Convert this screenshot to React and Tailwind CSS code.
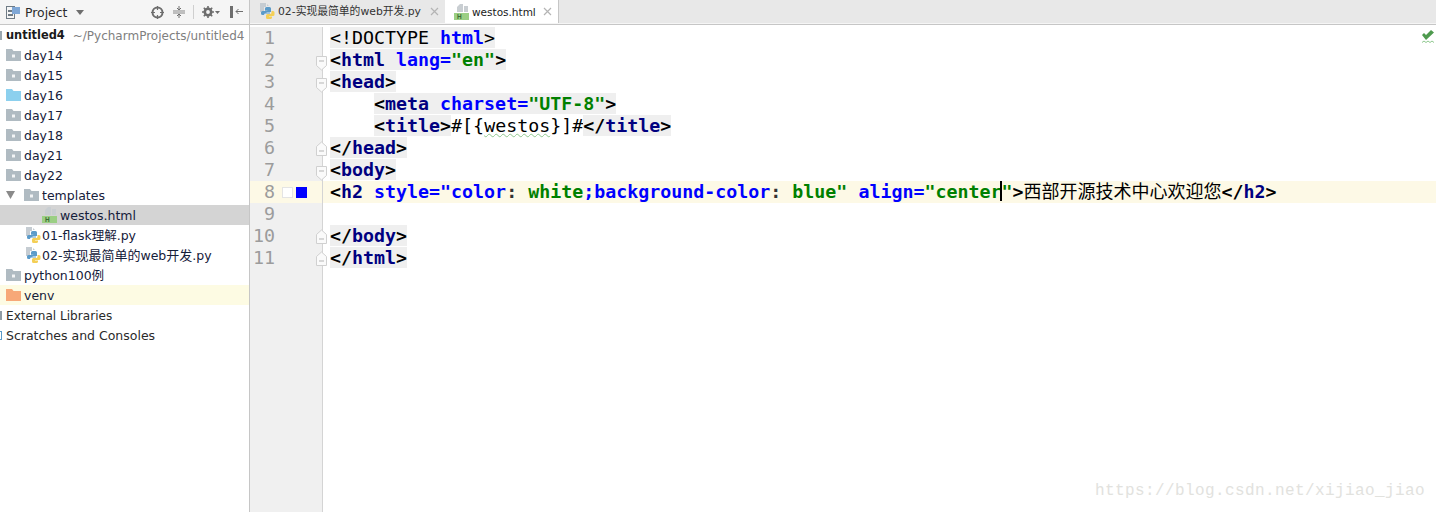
import React from "react";

const mono = "font-['DejaVu_Sans_Mono',monospace]";
const ui = "font-['DejaVu_Sans','Noto_Sans_CJK_SC',sans-serif]";

function Folder({ color = "#b0bbc2", dot = true }) {
  return (
    <svg width="15" height="12" viewBox="0 0 15 12" className="shrink-0">
      <path d="M0 0h6l1.500 2H15v10H0z" fill={color} />
      {dot && <rect x="6" y="5.500" width="3" height="3" fill="#f2f4f5" />}
    </svg>
  );
}

function PyIcon() {
  return (
    <svg width="16" height="17" viewBox="0 0 16 17" className="shrink-0">
      <path d="M1 0h6v4H5v5H1z" fill="#c5ccd2" />
      <path d="M8 1l2 2H8z" fill="#c5ccd2" />
      <path d="M6 5.500a1.500 1.500 0 0 1 1.500-1.500h3A1.500 1.500 0 0 1 12 5.500V9H7.500v.6H11v1H6.500A1.500 1.500 0 0 0 5 12H3.500A1.500 1.500 0 0 1 2 10.500v-1A1.500 1.500 0 0 1 3.500 8H8a1 1 0 0 0 .5-.2H6z" fill="#5b9bc9" />
      <path d="M12.500 8H14a1.500 1.500 0 0 1 1.500 1.500v2A1.500 1.500 0 0 1 14 13h-4v.6h3v1.200A1.500 1.500 0 0 1 11.500 16h-3A1.500 1.500 0 0 1 7 14.500V12.500A1.500 1.500 0 0 1 8.500 11h2.500a1.500 1.500 0 0 0 1.500-1.500z" fill="#f4cf56" />
    </svg>
  );
}

function HtmlIcon() {
  return (
    <svg width="15" height="16" viewBox="0 0 15 16" className="shrink-0">
      <path d="M3 3l3-3h3v8H3z" fill="#c9ced2" />
      <path d="M10 2h4v6h-4z" fill="#c9ced2" />
      <rect x="0" y="9" width="15" height="7" fill="#9bcf84" />
      <text x="3" y="15" fontSize="6.500" fontWeight="700" fill="#3c6b34" fontFamily="Liberation Sans">H</text>
    </svg>
  );
}

function CloseX() {
  return (
    <svg width="9" height="9" viewBox="0 0 9 9" className="shrink-0">
      <path d="M1 1l7 7M8 1L1 8" stroke="#b4b4b4" strokeWidth="1.200" />
    </svg>
  );
}

function Toolbar() {
  return (
    <div className="flex h-[25px] items-center border-b border-[#c6c6c6] bg-[#f5f5f5] pl-[6px]">
      <svg width="14" height="13" viewBox="0 0 14 13" className="shrink-0">
        <rect x="0.500" y="0.500" width="8" height="12" fill="none" stroke="#6f7b85" />
        <rect x="2" y="4" width="5" height="2" fill="#6f7b85" />
        <rect x="2" y="8" width="5" height="2" fill="#6f7b85" />
        <rect x="6" y="1" width="8" height="7" fill="#7fa7d6" />
      </svg>
      <span className={`ml-[5px] w-[42px] whitespace-nowrap pt-[2px] text-[12.4px] text-[#2a2a2a] ${ui}`}>Project</span>
      <svg width="8" height="5" viewBox="0 0 8 5" className="ml-[9px] shrink-0">
        <path d="M0 0h8L4 5z" fill="#6e6e6e" />
      </svg>
      <svg width="13" height="13" viewBox="0 0 13 13" className="ml-[67px] shrink-0">
        <circle cx="6.500" cy="6.500" r="5" fill="none" stroke="#6e6e6e" strokeWidth="2" />
        <path d="M6.500 0v4M6.500 9v4M0 6.500h4M9 6.500h4" stroke="#6e6e6e" strokeWidth="1.200" />
      </svg>
      <svg width="12" height="12" viewBox="0 0 12 12" className="ml-[9px] shrink-0">
        <path d="M0 6h12" stroke="#8a8a8a" />
        <path d="M0 4.500h12M0 7.500h12" stroke="#bdbdbd" />
        <path d="M6 0v3.500M4 2l2 2 2-2M6 12V8.500M4 10l2-2 2 2" stroke="#6e6e6e" fill="none" />
      </svg>
      <div className="ml-[8px] h-[14px] w-px bg-[#cfcfcf]" />
      <svg width="12" height="12" viewBox="0 0 12 12" className="ml-[8px] shrink-0">
        <circle cx="6" cy="6" r="3.200" fill="none" stroke="#6e6e6e" strokeWidth="2.600" />
        <path d="M6 0v2.500M6 9.500V12M0 6h2.500M9.500 6H12M1.800 1.800l1.800 1.800M8.400 8.400l1.800 1.800M1.800 10.200l1.800-1.800M8.400 3.600l1.800-1.800" stroke="#6e6e6e" strokeWidth="1.600" />
      </svg>
      <svg width="5" height="3" viewBox="0 0 5 3" className="ml-px shrink-0">
        <path d="M0 0h5L2.500 3z" fill="#6e6e6e" />
      </svg>
      <svg width="13" height="12" viewBox="0 0 13 12" className="ml-[10px] shrink-0">
        <rect x="0" y="0" width="3" height="12" fill="#6e6e6e" />
        <path d="M13 5.500H6M8.500 3L6 5.500 8.500 8" stroke="#6e6e6e" fill="none" />
      </svg>
    </div>
  );
}

function Row({ pad = "pl-[6px]", icon, gap = "gap-[3px]", className = "", children }) {
  return (
    <div className={`flex h-5 items-center ${pad} ${gap} text-[#15203a] ${className}`}>
      {icon}
      <span className="whitespace-nowrap pt-[2px]">{children}</span>
    </div>
  );
}

function Tree() {
  return (
    <div className={`text-[12.5px] ${ui}`}>
      <div className="flex h-5 items-center">
        <div className="h-[9px] w-[2px] shrink-0 bg-[#9aa7b0]" />
        <span className="ml-1 shrink-0 pt-[2px] text-[11.4px] font-bold text-[#1a1a1a]">untitled4</span>
        <span className="ml-[8px] whitespace-nowrap pt-[2px] text-[12px] text-[#808080]">~/PycharmProjects/untitled4</span>
      </div>
      {["day14", "day15"].map((d) => (
        <Row key={d} icon={<Folder />}>{d}</Row>
      ))}
      <Row icon={<Folder color="#8cd0ee" dot={false} />}>day16</Row>
      {["day17", "day18", "day21", "day22"].map((d) => (
        <Row key={d} icon={<Folder />}>{d}</Row>
      ))}
      <div className="flex h-5 items-center pl-[6px] text-[#15203a]">
        <svg width="9" height="8" viewBox="0 0 9 8" className="shrink-0">
          <path d="M0 0h9L4.500 8z" fill="#8a8a8a" />
        </svg>
        <div className="ml-[9px]">
          <Folder />
        </div>
        <span className="ml-[3px] pt-[2px]">templates</span>
      </div>
      <Row pad="pl-[42px]" icon={<HtmlIcon />} className="bg-[#d4d4d4]">westos.html</Row>
      <Row pad="pl-[25px]" gap="gap-px" icon={<PyIcon />}>01-flask理解.py</Row>
      <Row pad="pl-[25px]" gap="gap-px" icon={<PyIcon />}>
        02-<span className="text-[13px]">实现最简单的</span>web<span className="text-[13px]">开发</span>.py
      </Row>
      <Row icon={<Folder />}>python100例</Row>
      <Row icon={<Folder color="#f7a878" dot={false} />} className="bg-[#fdfbe3]">venv</Row>
      <div className="flex h-5 items-center text-[#2a2a2a]">
        <div className="h-[9px] w-[2px] bg-[#8f9ba5]" />
        <span className="ml-1 pt-[2px] text-[12.1px]">External Libraries</span>
      </div>
      <div className="flex h-5 items-center text-[#2a2a2a]">
        <div className="h-[9px] w-[2px] border-y border-r border-[#5b9bc9]" />
        <span className="ml-1 pt-[2px]">Scratches and Consoles</span>
      </div>
    </div>
  );
}

function Tabs() {
  return (
    <div className={`h-[25px] border-b border-[#c6c6c6] bg-[#f5f5f5] ${ui}`}>
      <div className="flex h-[23px] bg-[#e8e8e8] text-[10.8px]">
        <div className="flex w-[195px] items-center pl-[9px] text-[#333]">
          <PyIcon />
          <span className="ml-[3px] whitespace-nowrap pt-[2px]">02-实现最简单的web开发.py</span>
          <span className="ml-[9px]"><CloseX /></span>
        </div>
        <div className="flex w-[114px] items-center border-r border-[#c6c6c6] bg-white pl-[9px] text-[#1a1a1a]">
          <HtmlIcon />
          <span className="ml-[3px] pt-[2px] text-[10.5px]">westos.html</span>
          <span className="ml-[7px]"><CloseX /></span>
        </div>
      </div>
    </div>
  );
}

function Fold({ dir }) {
  if (dir === "down") {
    return (
      <svg width="12" height="15" viewBox="0 0 12 15" className="absolute right-[-6px] top-[7px]">
        <path d="M.500.500h10v9l-5 4.500-5-4.500z" fill="#fafafa" stroke="#d0d0d0" />
        <path d="M3 5h5" stroke="#b5b5b5" />
      </svg>
    );
  }
  return (
    <svg width="12" height="15" viewBox="0 0 12 15" className="absolute right-[-6px] top-[4px]">
      <path d="M.500 14.500h10v-9l-5-4.500-5 4.500z" fill="#fafafa" stroke="#d0d0d0" />
      <path d="M3 10h5" stroke="#b5b5b5" />
    </svg>
  );
}

// bold navy tag on the grey block the IDE paints for a matched tag
const Tag = ({ children }) => <b className="text-[#000080]">{children}</b>;
const Lt = ({ children }) => <b className="text-black">{children}</b>;
const Attr = ({ children }) => <b className="text-[#0000ff]">{children}</b>;
const Str = ({ children }) => <b className="text-[#008000]">{children}</b>;
const Mark = ({ children }) => <span className="bg-[#efefef]">{children}</span>;

const lines = [
  { code: <Mark>{"<!DOCTYPE "}<Attr>html</Attr>{">"}</Mark> },
  { fold: "down", code: <Mark><Lt>{"<"}</Lt><Tag>html</Tag> <Attr>lang=</Attr><Str>"en"</Str><Lt>{">"}</Lt></Mark> },
  { fold: "down", code: <Mark><Lt>{"<"}</Lt><Tag>head</Tag><Lt>{">"}</Lt></Mark> },
  { code: <>{"    "}<Mark><Lt>{"<"}</Lt><Tag>meta</Tag> <Attr>charset=</Attr><Str>"UTF-8"</Str><Lt>{">"}</Lt></Mark></> },
  {
    code: (
      <>
        {"    "}<Mark><Lt>{"<"}</Lt><Tag>title</Tag><Lt>{">"}</Lt></Mark>
        {"#[{"}<span className="underline decoration-[#8fc88f] decoration-wavy decoration-1">westos</span>{"}]#"}
        <Mark><Lt>{"</"}</Lt><Tag>title</Tag><Lt>{">"}</Lt></Mark>
      </>
    ),
  },
  { fold: "up", code: <Mark><Lt>{"</"}</Lt><Tag>head</Tag><Lt>{">"}</Lt></Mark> },
  { fold: "down", code: <Mark><Lt>{"<"}</Lt><Tag>body</Tag><Lt>{">"}</Lt></Mark> },
  {
    current: true,
    code: (
      <>
        <Lt>{"<"}</Lt><Tag>h2</Tag> <Attr>style=</Attr><Attr>"color</Attr><b className="text-[#333]">:</b> <Str>white</Str>
        <Attr>;background-color</Attr><b className="text-[#333]">:</b> <Str>blue"</Str> <Attr>align=</Attr><Str>"center</Str>
        <span className="relative">
          <span className="absolute left-[-1px] top-0 h-5 w-[2px] bg-black" />
          <Str>"</Str>
        </span>
        <Lt>{">"}</Lt>
        <span className="font-['Noto_Sans_CJK_SC',sans-serif] text-[18px] leading-none">西部开源技术中心欢迎您</span>
        <Lt>{"</"}</Lt><Tag>h2</Tag><Lt>{">"}</Lt>
      </>
    ),
  },
  { code: null },
  { fold: "up", code: <Mark><Lt>{"</"}</Lt><Tag>body</Tag><Lt>{">"}</Lt></Mark> },
  { fold: "up", code: <Mark><Lt>{"</"}</Lt><Tag>html</Tag><Lt>{">"}</Lt></Mark> },
];

function Editor() {
  return (
    <div className={`relative flex-1 bg-white pt-[2px] ${mono} text-[18.3px]`}>
      {lines.map((l, i) => (
        <div key={i} className={`flex h-[22px] leading-[22px] ${l.current ? "bg-[#fdf9e6]" : ""}`}>
          <div className={`relative flex w-[73px] shrink-0 border-r border-[#d4d4d4] ${l.current ? "" : "bg-[#f0f0f0]"}`}>
            <span className="w-[25px] shrink-0 text-right text-[#9c9c9c]">{i + 1}</span>
            {l.current && (
              <>
                <span className="ml-[7px] mt-[6px] h-[11px] w-[11px] border border-[#e4e4e4] bg-white" />
                <span className="ml-[3px] mt-[6px] h-[11px] w-[11px] bg-[#0000ff]" />
              </>
            )}
            {l.fold && <Fold dir={l.fold} />}
          </div>
          <div className="whitespace-pre pl-[7px] text-black">{l.code}</div>
        </div>
      ))}
      <div className="h-[243px] w-[73px] border-r border-[#d4d4d4] bg-[#f0f0f0]" />
      <svg width="12" height="13" viewBox="0 0 12 13" className="absolute right-[2px] top-[5px]">
        <path d="M0 5l2-2 2 2 5-5 3 2.500L4 10z" fill="#4e9a4e" />
        <path d="M0 12.500l2-1.500 2 1.500 2-1.500 2 1.500 2-1.500 2 1.500" stroke="#8fc88f" fill="none" />
      </svg>
      <div className="absolute bottom-[9px] right-[11px] font-['Liberation_Mono',monospace] text-[16px] leading-6 tracking-[0.4px] text-[#e2e2de]">
        https://blog.csdn.net/xijiao_jiao
      </div>
    </div>
  );
}

export default function App() {
  return (
    <div className="flex h-[512px] w-[1436px] overflow-hidden bg-white">
      <aside className="w-[250px] shrink-0 overflow-hidden border-r border-[#c6c6c6]">
        <Toolbar />
        <Tree />
      </aside>
      <main className="flex min-w-0 flex-1 flex-col">
        <Tabs />
        <Editor />
      </main>
    </div>
  );
}
